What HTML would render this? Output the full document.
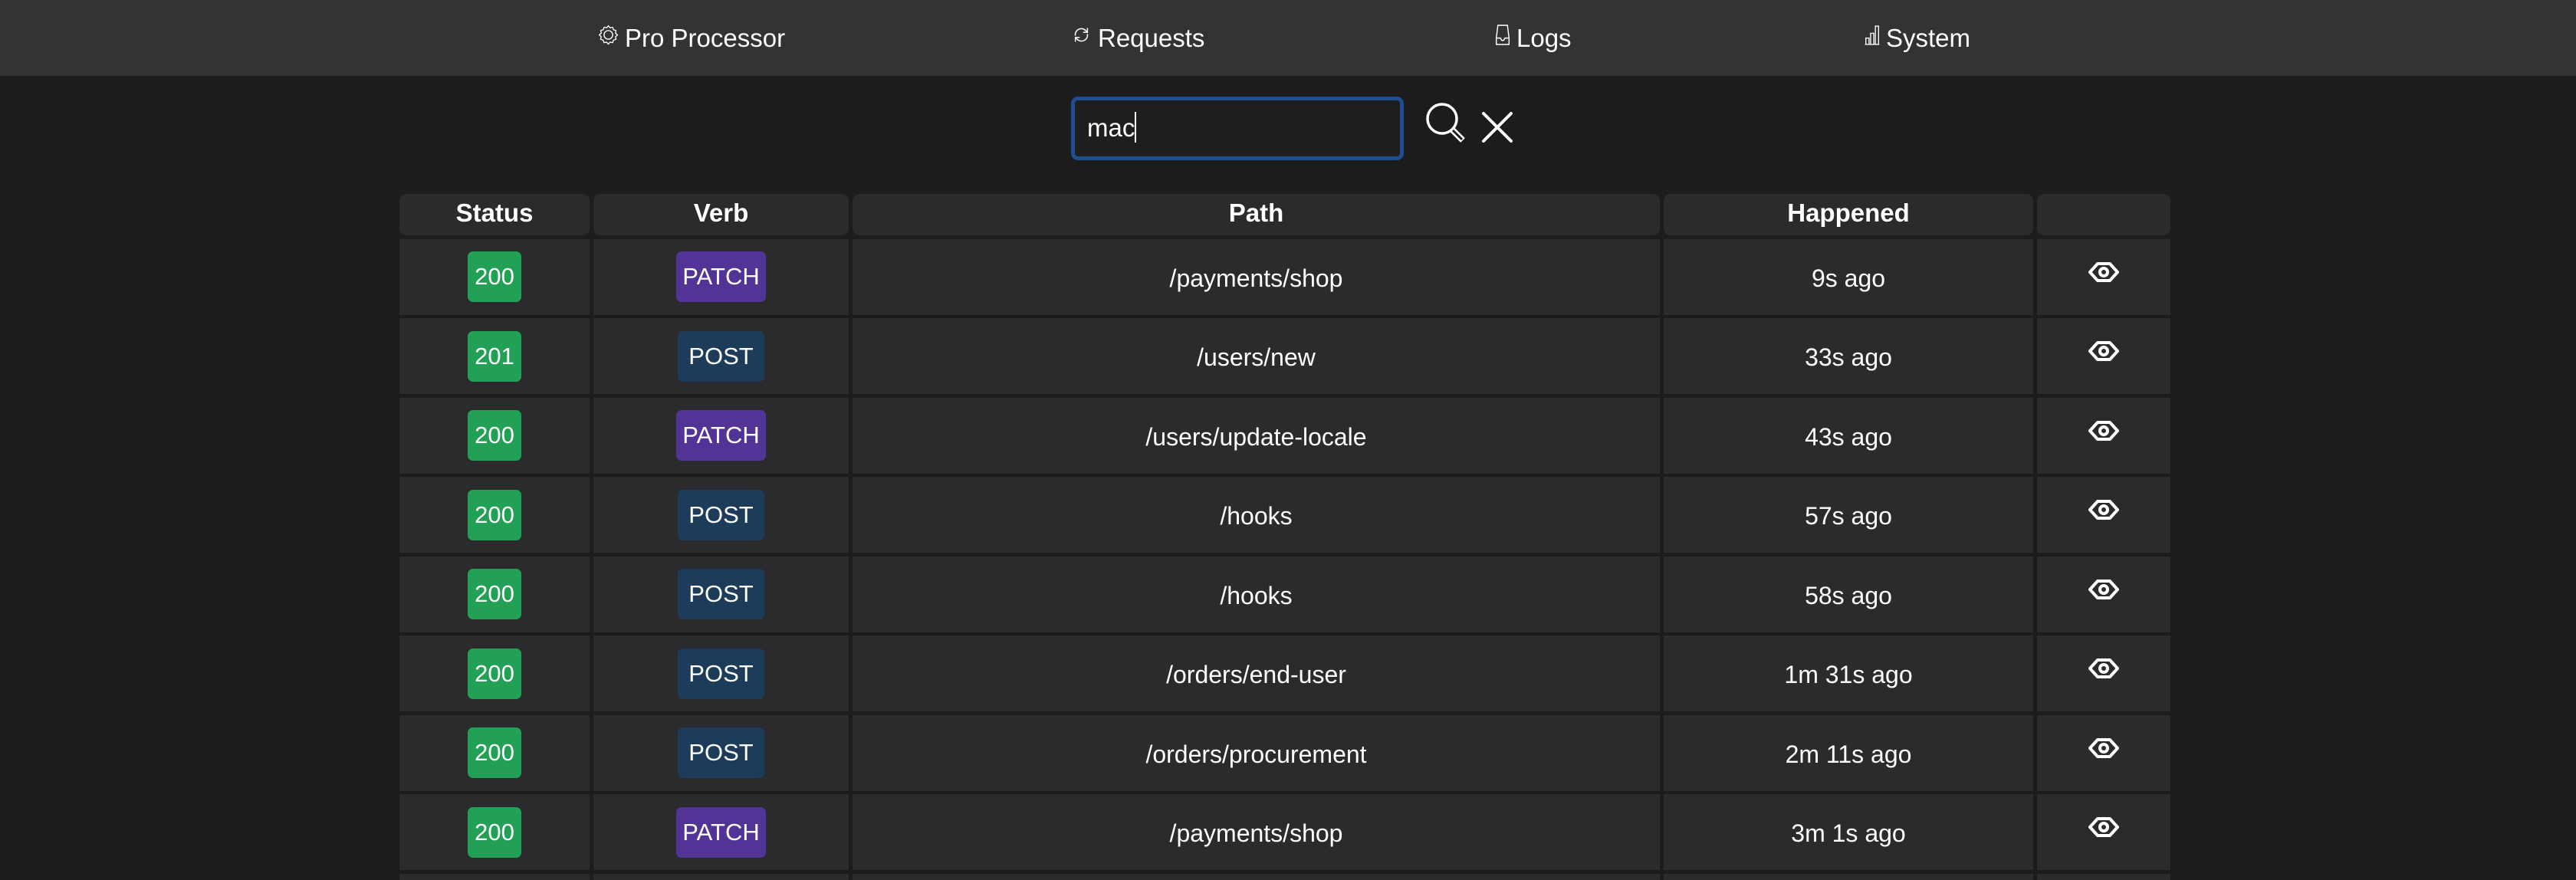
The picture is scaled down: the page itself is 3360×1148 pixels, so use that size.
<!DOCTYPE html>
<html><head><meta charset="utf-8"><style>
*{margin:0;padding:0;box-sizing:border-box}
html{width:3360px;height:1148px;overflow:hidden}
body{width:3360px;height:1148px;background:#1c1c1c;font-family:"Liberation Sans",sans-serif;color:#fff;position:relative;overflow:hidden}
.nav{position:absolute;left:0;top:0;width:3360px;height:99px;background:#333}
.ni{position:absolute;top:0;height:99px;display:flex;align-items:center;font-size:33px;color:#fff}
.ni svg{margin-right:8px;margin-top:-8px}
.search{position:absolute;left:1397px;top:126px;width:434px;height:83px;border:5px solid #1f4d92;border-radius:9px;background:#1e1e1e;font-size:33px;padding-left:16px;line-height:72px}
.cur{display:inline-block;width:2px;height:40px;background:#fff;vertical-align:middle;margin-top:-6px}
.wrap{position:absolute;left:521px;top:253px;width:2315px;height:895px;overflow:hidden}
.grid{display:grid;grid-template-columns:248px 333px 1053px 482px 174px;column-gap:5px;row-gap:4.5px;grid-template-rows:54px repeat(9,99px)}
.h{background:#2b2b2d;border-radius:9px;display:flex;align-items:center;justify-content:center;font-size:33px;font-weight:bold;padding-bottom:4px}
.c{background:#2b2b2d;display:flex;align-items:center;justify-content:center;font-size:32px;padding-top:4px}
.b{border-radius:7px;height:66px;line-height:66px;padding:0 9px;font-size:31px;margin-top:-4px}
.g{background:#21a056}.p{background:#523496;padding:0 8px}.s{background:#1c3c5a;padding:0 14px}
.e{align-items:flex-start;padding-top:28px}
</style></head><body>
<div class="nav">
<div class="ni" style="left:780px"><svg width="27" height="27" viewBox="0 0 24 24" fill="none" stroke="#fff" stroke-width="1.2"><path d="M12 1.5l2 2.3 3-.6 1 2.9 2.9 1-.6 3 2.3 2-2.3 2 .6 3-2.9 1-1 2.9-3-.6-2 2.3-2-2.3-3 .6-1-2.9-2.9-1 .6-3L1.5 12l2.3-2-.6-3 2.9-1 1-2.9 3 .6z"/><circle cx="12" cy="12" r="5"/></svg>Pro Processor</div>
<div class="ni" style="left:1397px"><svg width="27" height="27" viewBox="0 0 24 24" fill="none" stroke="#fff" stroke-width="1.3"><path d="M5 13a7 7 0 0 1 12-6l2 2M19 11a7 7 0 0 1-12 6l-2-2"/><path d="M19 4v5h-5M5 20v-5h5"/></svg>Requests</div>
<div class="ni" style="left:1950px"><svg width="20" height="27" viewBox="0 0 18 26" fill="none" stroke="#fff" stroke-width="1.4"><path d="M3 1h12l2 16v8H1v-8z"/><path d="M1 17h5l2 3h2l2-3h5"/></svg>Logs</div>
<div class="ni" style="left:2432px"><svg width="20" height="27" viewBox="0 0 18 26" fill="none" stroke="#fff" stroke-width="1.3"><path d="M1 25V17h4v8M7 25V11h4v14M13 25V2h4v23M0 25h18"/></svg>System</div>
</div>
<div class="search">mac<span class="cur"></span></div>
<svg style="position:absolute;left:1860px;top:134px" width="56" height="56" viewBox="0 0 56 56" fill="none" stroke="#fff" stroke-width="3.5"><circle cx="21" cy="21" r="19"/><path d="M34 35l14 14" stroke-width="8" stroke-linecap="butt"/><path d="M35 36l12 12" stroke="#1c1c1c" stroke-width="3"/></svg>
<svg style="position:absolute;left:1932px;top:145px" width="42" height="42" viewBox="0 0 42 42" stroke="#fff" stroke-width="4" stroke-linecap="round"><path d="M3 3l36 36M39 3L3 39"/></svg>
<div class="wrap"><div class="grid">
<div class="h">Status</div><div class="h">Verb</div><div class="h">Path</div><div class="h">Happened</div><div class="h"></div>
</div></div>
<script>
const rows=[["200","PATCH","/payments/shop","9s ago"],["201","POST","/users/new","33s ago"],["200","PATCH","/users/update-locale","43s ago"],["200","POST","/hooks","57s ago"],["200","POST","/hooks","58s ago"],["200","POST","/orders/end-user","1m 31s ago"],["200","POST","/orders/procurement","2m 11s ago"],["200","PATCH","/payments/shop","3m 1s ago"],["200","POST","/orders","3m 20s ago"]];
const eye='<svg width="40" height="30" viewBox="0 0 40 30" fill="none" stroke="#fff" stroke-width="4" stroke-linejoin="round"><path d="M2 15L12 4h16l10 11-10 11H12z"/><circle cx="20" cy="15" r="5"/></svg>';
let h='';for(const r of rows){h+=`<div class="c"><span class="b g">${r[0]}</span></div><div class="c"><span class="b ${r[1]=='PATCH'?'p':'s'}">${r[1]}</span></div><div class="c">${r[2]}</div><div class="c">${r[3]}</div><div class="c e">${eye}</div>`}
document.querySelector('.grid').insertAdjacentHTML('beforeend',h);
</script>
</body></html>
